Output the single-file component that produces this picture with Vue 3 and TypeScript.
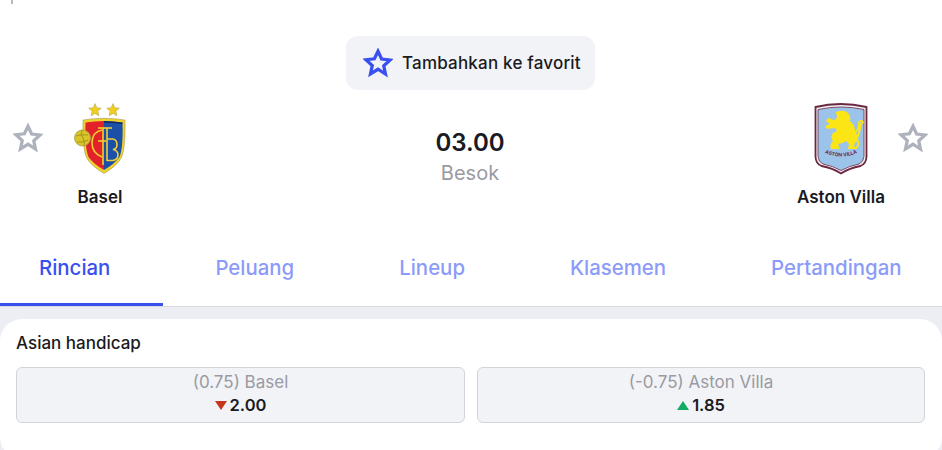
<script setup lang="ts">
const tabs: string[] = ['Rincian', 'Peluang', 'Lineup', 'Klasemen', 'Pertandingan']
const starPath = 'M12 2.6l2.9 6.2 6.7.8-5 4.6 1.4 6.7L12 17l-6 3.7 1.4-6.7-5-4.6 6.7-.8z'
const smallStar = 'M0-6.400l1.800 4.200 4.500.4-3.400 3 1 4.500L0 3.400l-3.900 2.300 1-4.500-3.400-3 4.500-.4z'
</script>

<template>
  <div class="page">
    <div class="header">
      <i class="tick"></i>
      <div class="fav-row">
        <button class="fav">
          <svg class="fav-star" viewBox="0 0 24 24"><path :d="starPath" /></svg>
          <span>Tambahkan ke favorit</span>
        </button>
      </div>
      <div class="match">
        <div class="side">
          <svg class="grey-star" viewBox="0 0 24 24"><path :d="starPath" /></svg>
          <div class="team">
            <svg class="crest" viewBox="0 0 60 84">
              <path :d="smallStar" transform="translate(25 12)" fill="#f2cf1d" stroke="#a89a55" stroke-width=".5" />
              <path :d="smallStar" transform="translate(43 12)" fill="#f2cf1d" stroke="#a89a55" stroke-width=".5" />
              <path d="M13 22q21-3.500 42 0 .8 27-3.500 37.500Q47 68 34 75.500 21 68 16.500 59.500 12.200 50 13 22z" fill="#efd22e" stroke="#8f8f5a" stroke-width=".5" />
              <path d="M15.500 24.500q9-1.500 18.500-1.500v49q-10.500-6-15.500-13-3.800-9-3-34.500z" fill="#e3212b" />
              <path d="M34 23q9.500 0 18.500 1.500.8 25.500-3 34.500-5 7-15.500 13z" fill="#1b4fa8" />
              <path d="M34 23q9.500 0 18.500 1.500l.1 1.500Q43 24.800 34 24.800z" fill="#10204f" opacity=".8" />
              <g fill="none" stroke="#f0d02c" stroke-width="1.600">
                <path d="M32 32q-10 2-10 13 0 10 10 14" />
                <path d="M33 30v37" />
                <path d="M28 30h14" />
                <path d="M28 43h8" />
                <path d="M37 30v33M37 41h6q4 1 4 5.500t-4 5q5 1 5 5.500t-5 5.500h-6" />
              </g>
              <circle cx="12.500" cy="40" r="8" fill="#d9c42a" stroke="#a79f45" stroke-width=".8" />
              <path d="M6 38q6-2 12-1M7 44q5 1 11-2M12 32q-2 5 1 8 2 3 1 8" fill="none" stroke="#8f8420" stroke-width=".7" />
            </svg>
            <span class="team-name">Basel</span>
          </div>
        </div>
        <div class="time">
          <strong>03.00</strong>
          <span>Besok</span>
        </div>
        <div class="side side-right">
          <div class="team">
            <svg class="crest" viewBox="0 0 60 84">
              <path d="M4.500 9q25-6 51 0v50q-.5 7-6 9-11 2-19.500 7.500Q21.500 70 10.500 68q-5.500-2-6-9z" fill="#f4f1f2" stroke="#6b2843" stroke-width="1.800" />
              <path d="M7 11.500q23-5 46 0v47q-.5 5.500-5 7.500-10 2-18 6.500Q22 68 12 66q-4.500-2-5-7.500z" fill="#9cc3ea" stroke="#6b2843" stroke-width=".8" />
              <path d="M25 14q8-3 12 1 3 3 2 8 5 4 5 10 3 4 3 9l-3 3-1 3 3 3h-9l1-5-3-3q-4 3-8 3l2 5h-9q-2-4 2-8-3-4 0-8l4-2-2-3-8 1-2-3 5-2-4-3 2-3 6 2q3-1 3-4-1-3-1-3z" fill="#fce514" />
              <path d="M43 35q5-2 5-9 0-4 3-3 2 2-1 3-1 5-2 9-1 4-3 6 5 4 0 9" fill="none" stroke="#fce514" stroke-width="1.800" />
              <path id="av-arc" d="M10 53q20 11 40 0" fill="none" />
              <text class="crest-text"><textPath href="#av-arc" startOffset="50%" text-anchor="middle">ASTON VILLA</textPath></text>
            </svg>
            <span class="team-name">Aston Villa</span>
          </div>
          <svg class="grey-star" viewBox="0 0 24 24"><path :d="starPath" /></svg>
        </div>
      </div>
      <nav class="tabs">
        <div v-for="(tab, i) in tabs" :key="tab" class="tab" :class="{ active: i === 0 }">{{ tab }}</div>
      </nav>
    </div>
    <section class="body">
      <div class="card">
        <h3>Asian handicap</h3>
        <div class="odds">
          <div class="odd">
            <span class="odd-label">(0.75) Basel</span>
            <span class="odd-value"><i class="down"></i>2.00</span>
          </div>
          <div class="odd">
            <span class="odd-label">(-0.75) Aston Villa</span>
            <span class="odd-value"><i class="up"></i>1.85</span>
          </div>
        </div>
      </div>
    </section>
  </div>
</template>

<style>
html, body { margin: 0; overflow: hidden; background: #fff; }
</style>

<style scoped>
.page {
  width: 942px;
  height: 450px;
  overflow: hidden;
  font-family: "Inter", "Noto Sans", sans-serif;
  color: #1a1a22;
  display: flex;
  flex-direction: column;
}
.header { position: relative; background: #fff; height: 306px; flex: none; overflow: hidden; }
.tick { position: absolute; left: 11px; top: 0; width: 2px; height: 4px; background: #b9b9c4; }
.fav-row { display: flex; justify-content: center; padding: 36px 1px 0 0; }
.fav {
  display: flex;
  align-items: center;
  gap: 9px;
  height: 54px;
  width: 249px;
  box-sizing: border-box;
  padding: 0 10px 0 17px;
  border: 0;
  border-radius: 12px;
  background: #f1f3f7;
  font: inherit;
  font-size: 17px;
  letter-spacing: .2px;
  font-weight: 500;
  color: #1a1a22;
  white-space: nowrap;
}
.fav-star { width: 30px; height: 30px; flex: none; }
.fav-star path { fill: none; stroke: #3a4ff0; stroke-width: 2.600; }
.match {
  display: grid;
  grid-template-columns: 1fr auto 1fr;
  align-items: start;
  height: 122px;
  margin-top: 8px;
}
.side { display: flex; align-items: flex-start; padding-left: 13px; }
.side-right { justify-content: flex-end; padding: 0 14px 0 0; }
.grey-star { width: 30px; height: 30px; flex: none; margin-top: 25px; }
.grey-star path { fill: none; stroke: #adb2bd; stroke-width: 2.600; }
.team { display: flex; flex-direction: column; align-items: center; width: 88px; margin-left: 13px; }
.side-right .team { margin: 0 13px 0 0; }
.crest { width: 60px; height: 84px; display: block; }
.crest-text { font-size: 5px; font-weight: 700; fill: #6b2843; }
.team-name { font-size: 17px; font-weight: 600; margin-top: 4px; white-space: nowrap; line-height: 22px; }
.time { display: flex; flex-direction: column; align-items: center; padding: 29px 2px 0 0; }
.time strong { font-size: 24px; font-weight: 600; line-height: 32px; }
.time span { font-size: 20px; line-height: 26px; color: #9a9aa2; margin-top: 1px; }
.tabs { position: absolute; left: -13.500px; bottom: 0; height: 86px; display: flex; }
.tab {
  flex: none;
  display: flex;
  align-items: center;
  justify-content: center;
  padding: 12px 52.500px 0;
  box-sizing: border-box;
  font-size: 20.400px;
  font-weight: 500;
  color: #8c9bfa;
  border-bottom: 3px solid transparent;
}
.tab.active { color: #3a4ff0; border-bottom-color: #3a4ff0; }
.body {
  flex: 1;
  background: #eceef3;
  border-top: 1px solid #d8d9de;
  padding-top: 12px;
}
.card {
  background: #fff;
  border-radius: 22px;
  height: 140px;
  padding: 12px 17px 0 16px;
  box-sizing: border-box;
}
h3 { margin: 0; font-size: 17px; font-weight: 500; line-height: 24px; }
.odds { display: grid; grid-template-columns: 449px 448px; gap: 12px; margin-top: 12px; }
.odd {
  height: 56px;
  box-sizing: border-box;
  border: 1px solid #d2d4da;
  border-radius: 6px;
  background: #f1f3f7;
  display: flex;
  flex-direction: column;
  align-items: center;
  justify-content: center;
  padding-top: 1px;
}
.odd-label { font-size: 17px; line-height: 22px; color: #9a9aa2; margin-top: -3px; }
.odd-value { font-size: 16.500px; line-height: 23px; font-weight: 600; display: flex; align-items: center; gap: 3px; margin-top: 1px; }
.down, .up { width: 0; height: 0; border-left: 6px solid transparent; border-right: 6px solid transparent; }
.down { border-top: 9px solid #c5361f; }
.up { border-bottom: 9px solid #12ab62; }
</style>
